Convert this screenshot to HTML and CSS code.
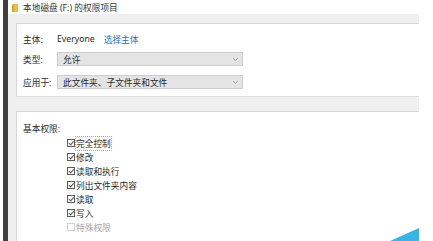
FILE: index.html
```html
<!DOCTYPE html>
<html lang="zh-CN">
<head>
    <meta charset="UTF-8">
    <meta name="viewport" content="width=device-width, initial-scale=1.0">
    <title>权限项目</title>
    <link rel="stylesheet" href="styles.css">
</head>
<body>

<div class="window">
    <div class="edge"></div>

    <div class="main">
        <!-- Title -->
        <div class="titlebar">
            <svg class="folder" width="6" height="8" viewBox="0 0 6 8">
                <path d="M0 1 L2 0 L6 0 L6 8 L0 8 Z" fill="#e9c04c"/>
                <path d="M0 1 L2 0 L2 8 L0 8 Z" fill="#d9a92c"/>
            </svg>
            <span>本地磁盘 (F:) 的权限项目</span>
        </div>

        <div class="content">
            <!-- Principal / type / applies to -->
            <div class="panel panel-top">
                <div class="row row-principal">
                    <span class="label">主体:</span>
                    <span class="value">Everyone</span>
                    <a class="link" href="#">选择主体</a>
                </div>
                <div class="row row-type">
                    <span class="label">类型:</span>
                    <div class="select">
                        <span>允许</span>
                        <svg class="chev" width="5" height="3" viewBox="0 0 5 3"><path d="M0.3 0.3 L2.5 2.5 L4.7 0.3" fill="none" stroke="#8a8a8a" stroke-width="0.8"/></svg>
                    </div>
                </div>
                <div class="row row-apply">
                    <span class="label">应用于:</span>
                    <div class="select">
                        <span>此文件夹、子文件夹和文件</span>
                        <svg class="chev" width="5" height="3" viewBox="0 0 5 3"><path d="M0.3 0.3 L2.5 2.5 L4.7 0.3" fill="none" stroke="#8a8a8a" stroke-width="0.8"/></svg>
                    </div>
                </div>
            </div>

            <!-- Basic permissions -->
            <div class="panel panel-perm">
                <div class="perm-title">基本权限:</div>
                <ul class="perm-list">
                    <li><span class="box checked"></span><span class="focus">完全控制</span></li>
                    <li><span class="box checked"></span>修改</li>
                    <li><span class="box checked"></span>读取和执行</li>
                    <li><span class="box checked"></span>列出文件夹内容</li>
                    <li><span class="box checked"></span>读取</li>
                    <li><span class="box checked"></span>写入</li>
                    <li class="disabled"><span class="box"></span>特殊权限</li>
                </ul>
            </div>
        </div>
    </div>

    <svg class="corner" width="29" height="13" viewBox="0 0 29 13">
        <path d="M0 13 L29 0 L29 13 Z" fill="#3ab4e7"/>
    </svg>
</div>

</body>
</html>
```

FILE: styles.css
```css
body { margin: 0; background: #fff; font-family: "Noto Sans", "Noto Sans CJK SC", sans-serif; font-size: 8.7px; color: #2a2a2a; overflow: hidden; }
.window { position: relative; display: flex; width: 433px; height: 241px; overflow: hidden; }
.edge { width: 5px; margin-left: 3px; background: #3f3f3f; }
.main { width: 411px; display: flex; flex-direction: column; }

.titlebar { height: 20px; display: flex; align-items: center; padding-left: 4px; padding-top: 1px; box-sizing: border-box; color: #333; background: #fff; }
.folder { margin-right: 5px; }

.content { flex: 1; background: #efefef; padding: 9px 0 0 8px; }
.panel { background: #fff; border-top: 1px solid #d6d6d6; border-left: 1px solid #d6d6d6; }
.panel-top { height: 74px; padding: 8px 0 0 6px; box-sizing: border-box; border-bottom: 1px solid #dcdcdc; }
.panel-perm { margin-top: 14px; height: 140px; padding: 10px 0 0 6px; box-sizing: border-box; }

.row { display: flex; align-items: center; height: 14px; }
.row-type { margin-top: 6px; }
.row-apply { margin-top: 9px; }
.label { width: 34px; }
.value { margin-right: 9px; }
.link { color: #1c6fc4; text-decoration: none; }

.select { width: 186px; height: 14px; box-sizing: border-box; display: flex; align-items: center; justify-content: space-between; padding: 0 4px 0 5px; background: #e4e4e4; border: 1px solid #cdcdcd; }

.perm-title { line-height: 14px; }
.perm-list { list-style: none; margin: 0; padding: 0 0 0 44px; }
.perm-list li { display: flex; align-items: center; height: 14px; }
.box { width: 8px; height: 8px; border: 1px solid #5a5a5a; box-sizing: border-box; margin-right: 1px; position: relative; background: #fff; }
.box.checked::after { content: ""; position: absolute; left: 2px; top: 0; width: 1.5px; height: 3.5px; border-right: 1px solid #555; border-bottom: 1px solid #555; transform: rotate(42deg); }
.focus { outline: 1px dotted #aaa; outline-offset: 0; }
.disabled { color: #a6a6a6; }
.disabled .box { border-color: #d0d0d0; }

.corner { position: absolute; left: 390px; top: 228px; }
```
